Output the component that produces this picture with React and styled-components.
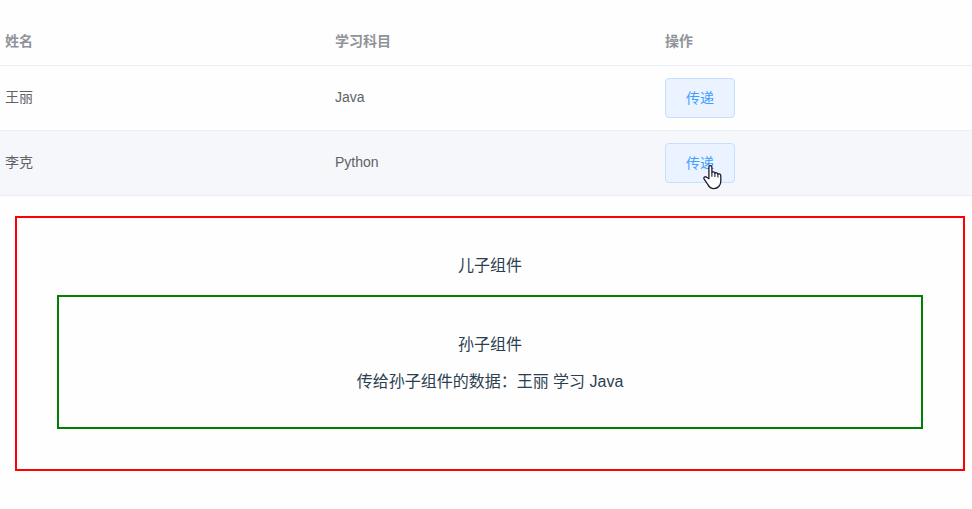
import React from "react";
import styled, { createGlobalStyle } from "styled-components";

const GlobalStyle = createGlobalStyle`
  * { box-sizing: border-box; }
  html, body { margin: 0; height: 100%; background: #fefefe; overflow: hidden; }
  body { font-family: "Liberation Sans", "Noto Sans CJK SC", sans-serif; }
`;

const Page = styled.main`
  padding-top: 17px;
  color: #2c3e50;
`;

const Table = styled.div`
  width: 100%;
  font-size: 14px;
  color: #606266;
`;

const Row = styled.div`
  display: grid;
  grid-template-columns: 330px 330px 1fr;
  align-items: center;
  height: 65px;
  padding-left: 5px;
  border-bottom: 1px solid #ebeef5;
  background: ${(p) => (p.$hover ? "#f5f7fb" : "transparent")};
`;

const HeaderRow = styled(Row)`
  height: 49px;
  color: #909399;
  font-weight: 700;
`;

const HeaderCell = styled.div`
  line-height: 23px;
`;

const Cell = styled.div`
  padding-bottom: 2px;
  line-height: 23px;
`;

const ActionCell = styled.div`
  position: relative;
  display: flex;
`;

const PlainButton = styled.button`
  width: 70px;
  height: 40px;
  padding: 0;
  border: 1px solid #c2e0ff;
  border-radius: 4px;
  background: #eaf3ff;
  color: #409eff;
  font: inherit;
  line-height: 1;
  cursor: pointer;
`;

const Pointer = styled.svg`
  position: absolute;
  left: 38px;
  top: 22px;
  width: 19px;
  height: 25px;
  pointer-events: none;
`;

const ChildBox = styled.section`
  height: 255px;
  margin: 20px 7px 0 15px;
  padding: 37px 40px 0;
  border: 2px solid red;
  text-align: center;
`;

const GrandchildBox = styled.section`
  height: 134px;
  margin-top: 19px;
  padding-top: 37px;
  border: 2px solid green;
`;

const Text = styled.p`
  height: 21px;
  margin: 0 0 16px;
  font-size: 16px;
  line-height: 21px;
`;

const rows = [
  { name: "王丽", subject: "Java" },
  { name: "李克", subject: "Python", hover: true },
];

function HandPointer() {
  return (
    <Pointer viewBox="0 0 19 25" aria-hidden="true">
      <path
        d="M5.9 13.6V2.4C5.9 .1 8.9 .1 8.9 2.4V7.6C9.4 6.5 11.9 6.7 11.9 8.4C12.5 7.3 14.9 7.6 14.9 9.3C15.6 8.4 17.8 8.8 17.8 10.8V16.3C17.8 19.8 15.2 23.6 10.9 23.6C7.6 23.6 6.1 21.8 4.9 19.6L1.2 14.2C.1 12.4 2.2 11 3.6 12.3Z"
        fill="#fff"
        stroke="#1c1c30"
        strokeWidth="1.3"
        strokeLinejoin="round"
      />
      <path d="M8.9 7.5V11.8M11.9 8.4V12M14.9 9.3V12.4" fill="none" stroke="#1c1c30" strokeWidth="1.1" />
    </Pointer>
  );
}

export default function App() {
  return (
    <>
      <GlobalStyle />
      <Page>
        <Table>
          <HeaderRow>
            <HeaderCell>姓名</HeaderCell>
            <HeaderCell>学习科目</HeaderCell>
            <HeaderCell>操作</HeaderCell>
          </HeaderRow>
          {rows.map((row) => (
            <Row key={row.name} $hover={row.hover}>
              <Cell>{row.name}</Cell>
              <Cell>{row.subject}</Cell>
              <ActionCell>
                <PlainButton type="button">传递</PlainButton>
                {row.hover && <HandPointer />}
              </ActionCell>
            </Row>
          ))}
        </Table>
        <ChildBox>
          <Text>儿子组件</Text>
          <GrandchildBox>
            <Text>孙子组件</Text>
            <Text>传给孙子组件的数据：王丽 学习 Java</Text>
          </GrandchildBox>
        </ChildBox>
      </Page>
    </>
  );
}
